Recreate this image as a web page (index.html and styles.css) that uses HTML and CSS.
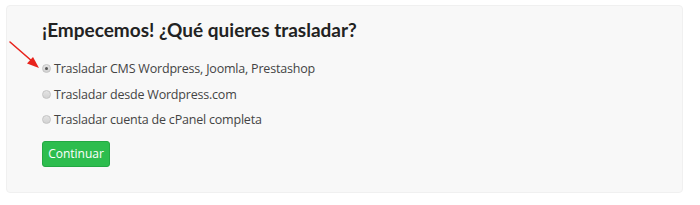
FILE: index.html
```html
<!DOCTYPE html>
<html lang="es">
<head>
    <meta charset="UTF-8">
    <title>Trasladar</title>
    <link rel="stylesheet" href="styles.css">
</head>
<body>
    <div class="panel">
        <h2 class="panel-title">¡Empecemos! ¿Qué quieres trasladar?</h2>

        <!-- opciones -->
        <label class="option"><span class="radio checked"></span>Trasladar CMS Wordpress, Joomla, Prestashop</label>
        <label class="option"><span class="radio"></span>Trasladar desde Wordpress.com</label>
        <label class="option"><span class="radio"></span>Trasladar cuenta de cPanel completa</label>

        <button class="continue-button">Continuar</button>
    </div>

    <!-- flecha roja -->
    <svg class="arrow" width="40" height="32" viewBox="0 0 40 32">
        <line x1="8" y1="2" x2="31" y2="22" stroke="#e8231c" stroke-width="1.6" stroke-linecap="round"/>
        <polygon points="37,28 25,23.5 31,17" fill="#e8231c"/>
    </svg>
</body>
</html>
```

FILE: styles.css
```css
body {
    margin: 0;
    background-color: #ffffff;
    font-family: 'Open Sans', sans-serif;
    position: relative;
}

.panel {
    margin: 5px 0 0 6px;
    width: 677px;
    height: 188px;
    box-sizing: border-box;
    padding: 12px 0 0 35px;
    background-color: #f8f8f8;
    border: 1px solid #f0f0f0;
    border-radius: 4px;
}

.panel-title {
    margin: 0 0 14px 0;
    font-family: 'Lato', sans-serif;
    font-size: 19px;
    line-height: 24px;
    font-weight: bold;
    color: #222222;
}

.option {
    display: flex;
    align-items: center;
    height: 25.5px;
    font-size: 12.5px;
    letter-spacing: -0.2px;
    color: #444444;
}

.radio {
    width: 7px;
    height: 7px;
    border: 1px solid #c4c4c4;
    border-radius: 50%;
    background: linear-gradient(#e4e4e4, #d2d2d2);
    margin-right: 3px;
    position: relative;
}

.radio.checked::after {
    content: '';
    position: absolute;
    left: 2px;
    top: 2px;
    width: 3px;
    height: 3px;
    border-radius: 50%;
    background-color: #555555;
}

.continue-button {
    margin-top: 8px;
    width: 68px;
    height: 26px;
    padding: 0;
    background-color: #2dbd4e;
    border: 1px solid #23a843;
    border-radius: 3px;
    color: #ffffff;
    font-family: 'Open Sans', sans-serif;
    font-size: 12px;
    cursor: pointer;
}

.arrow {
    position: absolute;
    left: 2px;
    top: 40px;
}
```
